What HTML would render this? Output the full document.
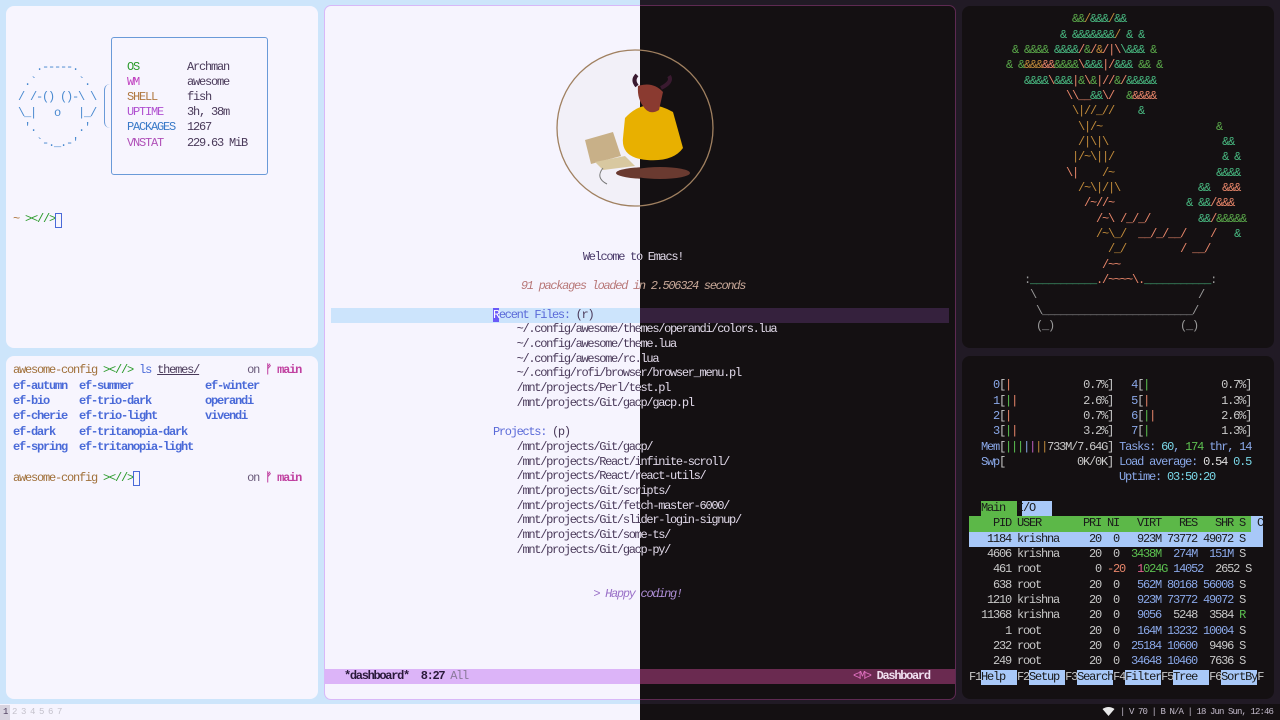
<!DOCTYPE html>
<html><head><meta charset="utf-8">
<style>
*{margin:0;padding:0;box-sizing:border-box}
html,body{width:1280px;height:720px;overflow:hidden}
body{position:relative;background:#cde5fb;font-family:"Liberation Mono",monospace;font-size:12px}
.abs{position:absolute}
pre{font-family:"Liberation Mono",monospace;font-size:12px;letter-spacing:-1.2px;white-space:pre;margin:0}
.em pre{letter-spacing:-1.3px}
#rbg{left:640px;top:0;width:640px;height:720px;background:#211a25}
.panel{border-radius:8px}
b{font-weight:normal}
.g{color:#5aa84a}.t{color:#48b880}.o{color:#c08a3a}.s{color:#e8866a}.p{color:#9a9a9a}
.bl{color:#8aa8e8}.cy{color:#7ad8e8}.gr{color:#5cc050}.wh{color:#e0e0e0}.dg{color:#c8c8c8}
</style></head><body>
<div class="abs" id="rbg"></div>
<div class="abs" style="left:0;top:704px;width:640px;height:16px;background:#f6f4fe"></div>
<div class="abs" style="left:640px;top:704px;width:640px;height:16px;background:#141012"></div>
<div class="abs" style="left:0;top:705px;width:10px;height:15px;background:#d8d4e0"></div>
<div class="abs" style="left:3px;top:705px;font-size:9px;line-height:15px;color:#c4c2cc;letter-spacing:3.6px;white-space:pre"><span style="color:#4a3a5a">1</span>234567</div>
<svg class="abs" style="left:1102px;top:707px" width="13" height="10" viewBox="0 0 13 10"><path d="M0.5 2 Q6.5 -2 12.5 2 L6.5 9 Z" fill="#e8e8e8"/></svg>
<div class="abs" style="left:1120px;top:705px;font-size:9px;line-height:15px;color:#c0b8c8;letter-spacing:-0.9px;white-space:pre">| V 70 | B N/A | 18 Jun Sun, 12:46</div>

<div class="abs panel" style="left:6px;top:6px;width:312px;height:342px;background:#f7f5fe"></div>
<pre class="abs" style="left:18px;top:60px;line-height:15.2px;color:#4a8ad0">   .-----.
 .`       `.
/ /-() ()-\ \
\_|   o   |_/
 '.       .'
   `-._.-'</pre>
<div class="abs" style="left:104px;top:84px;width:6px;height:44px;border-left:1px solid #6a9ad8;border-radius:6px 0 0 6px"></div>
<div class="abs" style="left:111px;top:37px;width:157px;height:138px;border:1px solid #6a9ad8;border-radius:3px"></div>
<pre class="abs" style="left:127px;top:59.5px;line-height:15.2px;color:#4a3a5a"><span style="color:#2a9a2a">OS</span>        Archman
<span style="color:#c040c0">WM</span>        awesome
<span style="color:#b07840">SHELL</span>     fish
<span style="color:#b050d0">UPTIME</span>    3h, 38m
<span style="color:#3a7ac8">PACKAGES</span>  1267
<span style="color:#b050b8">VNSTAT</span>    229.63 MiB</pre>
<pre class="abs" style="left:13px;top:212px;line-height:15px"><span style="color:#b07840">~</span> <span style="color:#2a9a2a">&gt;&lt;//&gt;</span></pre>
<div class="abs" style="left:55px;top:213px;width:7px;height:15px;border:1px solid #4a6ad8"></div>

<div class="abs panel" style="left:6px;top:356px;width:312px;height:343px;background:#f7f5fe"></div>
<pre class="abs" style="left:13px;top:363.3px;line-height:15.35px;color:#4a6ad8;font-weight:bold"><span style="font-weight:normal;color:#a0703a">awesome-config</span> <span style="font-weight:normal;color:#2a9a2a">&gt;&lt;//&gt;</span> <span style="font-weight:normal;color:#4a6ad8">ls</span> <span style="font-weight:normal;color:#4a3a5a;text-decoration:underline">themes/</span>        <span style="font-weight:normal;color:#6a5a7a">on</span> <span style="color:#c040a0">ᚠ main</span>
ef-autumn  ef-summer            ef-winter
ef-bio     ef-trio-dark         operandi
ef-cherie  ef-trio-light        vivendi
ef-dark    ef-tritanopia-dark
ef-spring  ef-tritanopia-light

<span style="font-weight:normal;color:#a0703a">awesome-config</span> <span style="font-weight:normal;color:#2a9a2a">&gt;&lt;//&gt;</span>                   <span style="font-weight:normal;color:#6a5a7a">on</span> <span style="color:#c040a0">ᚠ main</span></pre>
<div class="abs" style="left:133px;top:471px;width:7px;height:15px;border:1px solid #4a6ad8"></div>

<div class="abs panel" style="left:962px;top:6px;width:312px;height:342px;background:#141012"></div>
<pre class="abs" style="left:1000px;top:12.3px;line-height:15.35px;color:#5aa84a">            &amp;&amp;<b class="o">/</b><b class="t">&amp;&amp;&amp;</b><b class="o">/</b><b class="t">&amp;&amp;</b>
          <b class="t">&amp; &amp;&amp;&amp;&amp;&amp;&amp;&amp;</b><b class="o">/</b> <b class="t">&amp; &amp;</b>
  &amp; &amp;&amp;&amp;&amp; <b class="t">&amp;&amp;&amp;&amp;</b><b class="s">/</b>&amp;<b class="s">/</b><b class="o">&amp;</b><b class="s">/|\</b><b class="t">\&amp;&amp;&amp;</b> &amp;
 &amp; &amp;<b class="o">&amp;&amp;&amp;</b><b class="s">&amp;&amp;</b>&amp;&amp;&amp;&amp;<b class="s">\</b><b class="t">&amp;&amp;&amp;</b><b class="s">|/</b><b class="t">&amp;&amp;&amp;</b> &amp;&amp; &amp;
    <b class="t">&amp;&amp;&amp;&amp;</b><b class="s">\</b><b class="t">&amp;&amp;&amp;</b><b class="s">|</b>&amp;<b class="s">\</b>&amp;<b class="s">|//</b>&amp;<b class="s">/</b><b class="t">&amp;&amp;&amp;&amp;&amp;</b>
           <b class="s">\\__</b><b class="t">&amp;&amp;</b><b class="s">\/</b>  <b class="g">&amp;</b><b class="s">&amp;&amp;&amp;&amp;</b>
            <b class="o">\|//_//</b>    <b class="t">&amp;</b>
             <b class="o">\|/~</b>                   &amp;
             <b class="o">/|\|\</b>                   <b class="t">&amp;&amp;</b>
            <b class="o">|/~\||/</b>                  <b class="t">&amp; &amp;</b>
           <b class="s">\|</b>    <b class="o">/~</b>                 <b class="t">&amp;&amp;&amp;&amp;</b>
             <b class="o">/~\|/|\</b>             <b class="t">&amp;&amp;</b>  <b class="s">&amp;&amp;&amp;</b>
              <b class="s">/~//~</b>            <b class="t">&amp; &amp;&amp;</b><b class="s">/&amp;&amp;&amp;</b>
                <b class="s">/~\</b> <b class="s">/_/_/</b>        <b class="t">&amp;&amp;</b><b class="s">/</b>&amp;&amp;&amp;&amp;&amp;
                <b class="o">/~\_/</b>  <b class="s">__/_/__/</b>    <b class="s">/</b>   <b class="t">&amp;</b>
                  <b class="o">/_/</b>         <b class="s">/ __/</b>
                 <b class="s">/~~</b>
    <b class="p">:</b><b class="t">___________</b><b class="s">./~~~~\.</b><b class="t">___________</b><b class="p">:</b>
<b class="p">     \                           /
      \_________________________/
      (_)                     (_)</b></pre>

<div class="abs panel" style="left:962px;top:356px;width:312px;height:343px;background:#141012"></div>
<div class="abs" style="left:981px;top:501px;width:36px;height:15px;background:#5cb848"></div>
<div class="abs" style="left:1022px;top:501px;width:30px;height:15px;background:#a8c8f8"></div>
<div class="abs" style="left:969px;top:516px;width:282px;height:15.5px;background:#5cb848"></div>
<div class="abs" style="left:1251px;top:516px;width:12px;height:31px;background:#a8c8f8"></div>
<div class="abs" style="left:969px;top:531.5px;width:282px;height:15.5px;background:#a8c8f8"></div>
<div class="abs" style="left:981px;top:669.5px;width:36px;height:15.5px;background:#a8c8f8"></div>
<div class="abs" style="left:1029px;top:669.5px;width:36px;height:15.5px;background:#a8c8f8"></div>
<div class="abs" style="left:1077px;top:669.5px;width:36px;height:15.5px;background:#a8c8f8"></div>
<div class="abs" style="left:1125px;top:669.5px;width:36px;height:15.5px;background:#a8c8f8"></div>
<div class="abs" style="left:1173px;top:669.5px;width:36px;height:15.5px;background:#a8c8f8"></div>
<div class="abs" style="left:1221px;top:669.5px;width:36px;height:15.5px;background:#a8c8f8"></div>
<pre class="abs" style="left:969px;top:378.3px;line-height:15.35px;color:#c8c8c8">    <b class="bl">0</b>[<b class="s">|</b>            0.7%]   <b class="bl">4</b>[<b class="gr">|</b>            0.7%]
    <b class="bl">1</b>[<b class="gr">|</b><b class="s">|</b>           2.6%]   <b class="bl">5</b>[<b class="s">|</b>            1.3%]
    <b class="bl">2</b>[<b class="s">|</b>            0.7%]   <b class="bl">6</b>[<b class="gr">|</b><b class="s">|</b>           2.6%]
    <b class="bl">3</b>[<b class="gr">|</b><b class="s">|</b>           3.2%]   <b class="bl">7</b>[<b class="gr">|</b>            1.3%]
  <b class="bl">Mem</b>[<b class="gr">|||</b><b class="bl">|</b><b style="color:#c060c0">|</b><b class="o">||</b>733M/7.64G] <b class="bl">Tasks: </b><b class="cy">60</b><b class="bl">, </b><b class="gr">174</b><b class="bl"> thr, 14</b>
  <b class="bl">Swp</b>[            0K/0K] <b class="bl">Load average: </b><b class="wh">0.54</b> <b class="cy">0.5</b>
                         <b class="bl">Uptime: </b><b class="cy">03:50:20</b>

  <b style="color:#1a1a1a">Main</b>  <b style="color:#1a1a1a">I/O</b>
<b style="color:#1a1a1a">    PID USER       PRI NI   VIRT   RES   SHR S  C</b>
<b style="color:#1a1a1a">   1184 krishna     20  0   923M 73772 49072 S</b>
   4606 krishna     20  0  <b class="gr">3438M</b>  <b class="bl">274M  151M</b> S
    461 root         0 <b class="s">-20</b>  <b style="color:#e06090">1</b><b class="gr">024G</b> <b class="bl">14052</b>  2652 S
    638 root        20  0   <b class="bl">562M 80168 56008</b> S
   1210 krishna     20  0   <b class="bl">923M 73772 49072</b> S
  11368 krishna     20  0   <b class="bl">9056</b>  5248  3584 <b class="gr">R</b>
      1 root        20  0   <b class="bl">164M 13232 10004</b> S
    232 root        20  0  <b class="bl">25184 10600</b>  9496 S
    249 root        20  0  <b class="bl">34648 10460</b>  7636 S
F1<b style="color:#1a1a1a">Help  </b>F2<b style="color:#1a1a1a">Setup </b>F3<b style="color:#1a1a1a">Search</b>F4<b style="color:#1a1a1a">Filter</b>F5<b style="color:#1a1a1a">Tree  </b>F6<b style="color:#1a1a1a">SortBy</b>F</pre>

<!-- EMACS light layer -->
<div class="abs em" style="left:0;top:0;width:1280px;height:720px;clip-path:inset(0 640px 0 0)">
  <div class="abs" style="left:0;top:0;width:1280px;height:6px;background:#cde5fb"></div>
  <div class="abs" style="left:324px;top:5px;width:632px;height:695px;border:1.5px solid #d8b8f8;border-radius:7px;background:#f6f4fe"></div>
  <svg class="abs" style="left:555px;top:48px" width="160" height="160" viewBox="0 0 160 160">
    <circle cx="80" cy="80" r="78" fill="#f2f0f8" stroke="#a08060" stroke-width="1.3"/>
    <ellipse cx="95" cy="125" rx="34" ry="6" fill="#6a3a30"/>
    <path d="M70 70 Q90 48 118 64 L128 100 Q118 114 92 112 Q66 110 68 90Z" fill="#e8b000"/>
    <path d="M83 38 Q98 33 108 44 L104 62 Q94 68 88 58 Q82 50 83 38Z" fill="#8a3a30"/>
    <path d="M82 38 Q77 32 82 27 M106 40 Q118 34 114 28" stroke="#3a1a30" stroke-width="4" fill="none"/>
    <path d="M30 92 L58 84 L66 108 L36 116Z" fill="#c8b088"/>
    <path d="M40 114 L70 108 L80 118 L48 122Z" fill="#d8c8a0"/>
    <path d="M48 120 Q40 130 52 136" stroke="#777" fill="none"/>
  </svg>
  <div class="abs" style="left:331px;top:308px;width:618px;height:14.5px;background:#cce4fc"></div>
  <div class="abs" style="left:325px;top:669px;width:630px;height:15px;background:#dcb4f8"></div>
  <pre class="abs" style="left:331px;top:249.5px;width:604px;line-height:14.7px;text-align:center;color:#4a3a6a">Welcome to Emacs!</pre>
  <pre class="abs" style="left:331px;top:278.5px;width:604px;line-height:14.7px;text-align:center;color:#b87878;font-style:italic">91 packages loaded in 2.506324 seconds</pre>
  <pre class="abs" style="left:493px;top:307.6px;line-height:14.7px;color:#4a3a5a"><span style="background:#6a5af8;color:#fff">R</span><span style="color:#5a6ad8">ecent Files:</span> (r)
    ~/.config/awesome/themes/operandi/colors.lua
    ~/.config/awesome/theme.lua
    ~/.config/awesome/rc.lua
    ~/.config/rofi/browser/browser_menu.pl
    /mnt/projects/Perl/test.pl
    /mnt/projects/Git/gacp/gacp.pl

<span style="color:#5a6ad8">Projects:</span> (p)
    /mnt/projects/Git/gacp/
    /mnt/projects/React/infinite-scroll/
    /mnt/projects/React/react-utils/
    /mnt/projects/Git/scripts/
    /mnt/projects/Git/fetch-master-6000/
    /mnt/projects/Git/slider-login-signup/
    /mnt/projects/Git/some-ts/
    /mnt/projects/Git/gacp-py/


                 <span style="color:#9a70c8;font-style:italic">&gt; Happy coding!</span></pre>
  <pre class="abs" style="left:344px;top:669px;line-height:15px;color:#2a1a3a;font-weight:bold">*dashboard*  8:27 <span style="font-weight:normal;color:#8a7a9a">All</span></pre>
</div>

<!-- EMACS dark layer -->
<div class="abs em" style="left:0;top:0;width:1280px;height:720px;clip-path:inset(0 0 0 640px)">
  <div class="abs" style="left:324px;top:5px;width:632px;height:695px;border:1.5px solid #5e2a52;border-radius:7px;background:#141012"></div>
  <svg class="abs" style="left:555px;top:48px" width="160" height="160" viewBox="0 0 160 160">
    <circle cx="80" cy="80" r="78" fill="none" stroke="#a08060" stroke-width="1.3"/>
    <ellipse cx="105" cy="125" rx="30" ry="6" fill="#6a3a30"/>
    <path d="M70 70 Q90 48 118 64 L128 100 Q118 114 92 112 Q66 110 68 90Z" fill="#e8b000"/>
    <path d="M83 38 Q98 33 108 44 L104 62 Q94 68 88 58 Q82 50 83 38Z" fill="#8a3a30"/>
    <path d="M82 38 Q77 32 82 27 M106 40 Q118 34 114 28" stroke="#3a1a30" stroke-width="4" fill="none"/>
  </svg>
  <div class="abs" style="left:331px;top:308px;width:618px;height:14.5px;background:#35213d"></div>
  <div class="abs" style="left:325px;top:669px;width:630px;height:15px;background:#6a2a50"></div>
  <pre class="abs" style="left:331px;top:249.5px;width:604px;line-height:14.7px;text-align:center;color:#e0d8e8">Welcome to Emacs!</pre>
  <pre class="abs" style="left:331px;top:278.5px;width:604px;line-height:14.7px;text-align:center;color:#c8a898;font-style:italic">91 packages loaded in 2.506324 seconds</pre>
  <pre class="abs" style="left:493px;top:307.6px;line-height:14.7px;color:#e0d8e8">Recent Files: (r)
    ~/.config/awesome/themes/operandi/colors.lua
    ~/.config/awesome/theme.lua
    ~/.config/awesome/rc.lua
    ~/.config/rofi/browser/browser_menu.pl
    /mnt/projects/Perl/test.pl
    /mnt/projects/Git/gacp/gacp.pl

Projects: (p)
    /mnt/projects/Git/gacp/
    /mnt/projects/React/infinite-scroll/
    /mnt/projects/React/react-utils/
    /mnt/projects/Git/scripts/
    /mnt/projects/Git/fetch-master-6000/
    /mnt/projects/Git/slider-login-signup/
    /mnt/projects/Git/some-ts/
    /mnt/projects/Git/gacp-py/


                 <span style="color:#b090d8;font-style:italic">&gt; Happy coding!</span></pre>
  <pre class="abs" style="left:853px;top:669px;line-height:15px;color:#f0e0f0;font-weight:bold"><span style="font-weight:normal;color:#e070c0">&lt;M&gt;</span> Dashboard</pre>
</div>
</body></html>
